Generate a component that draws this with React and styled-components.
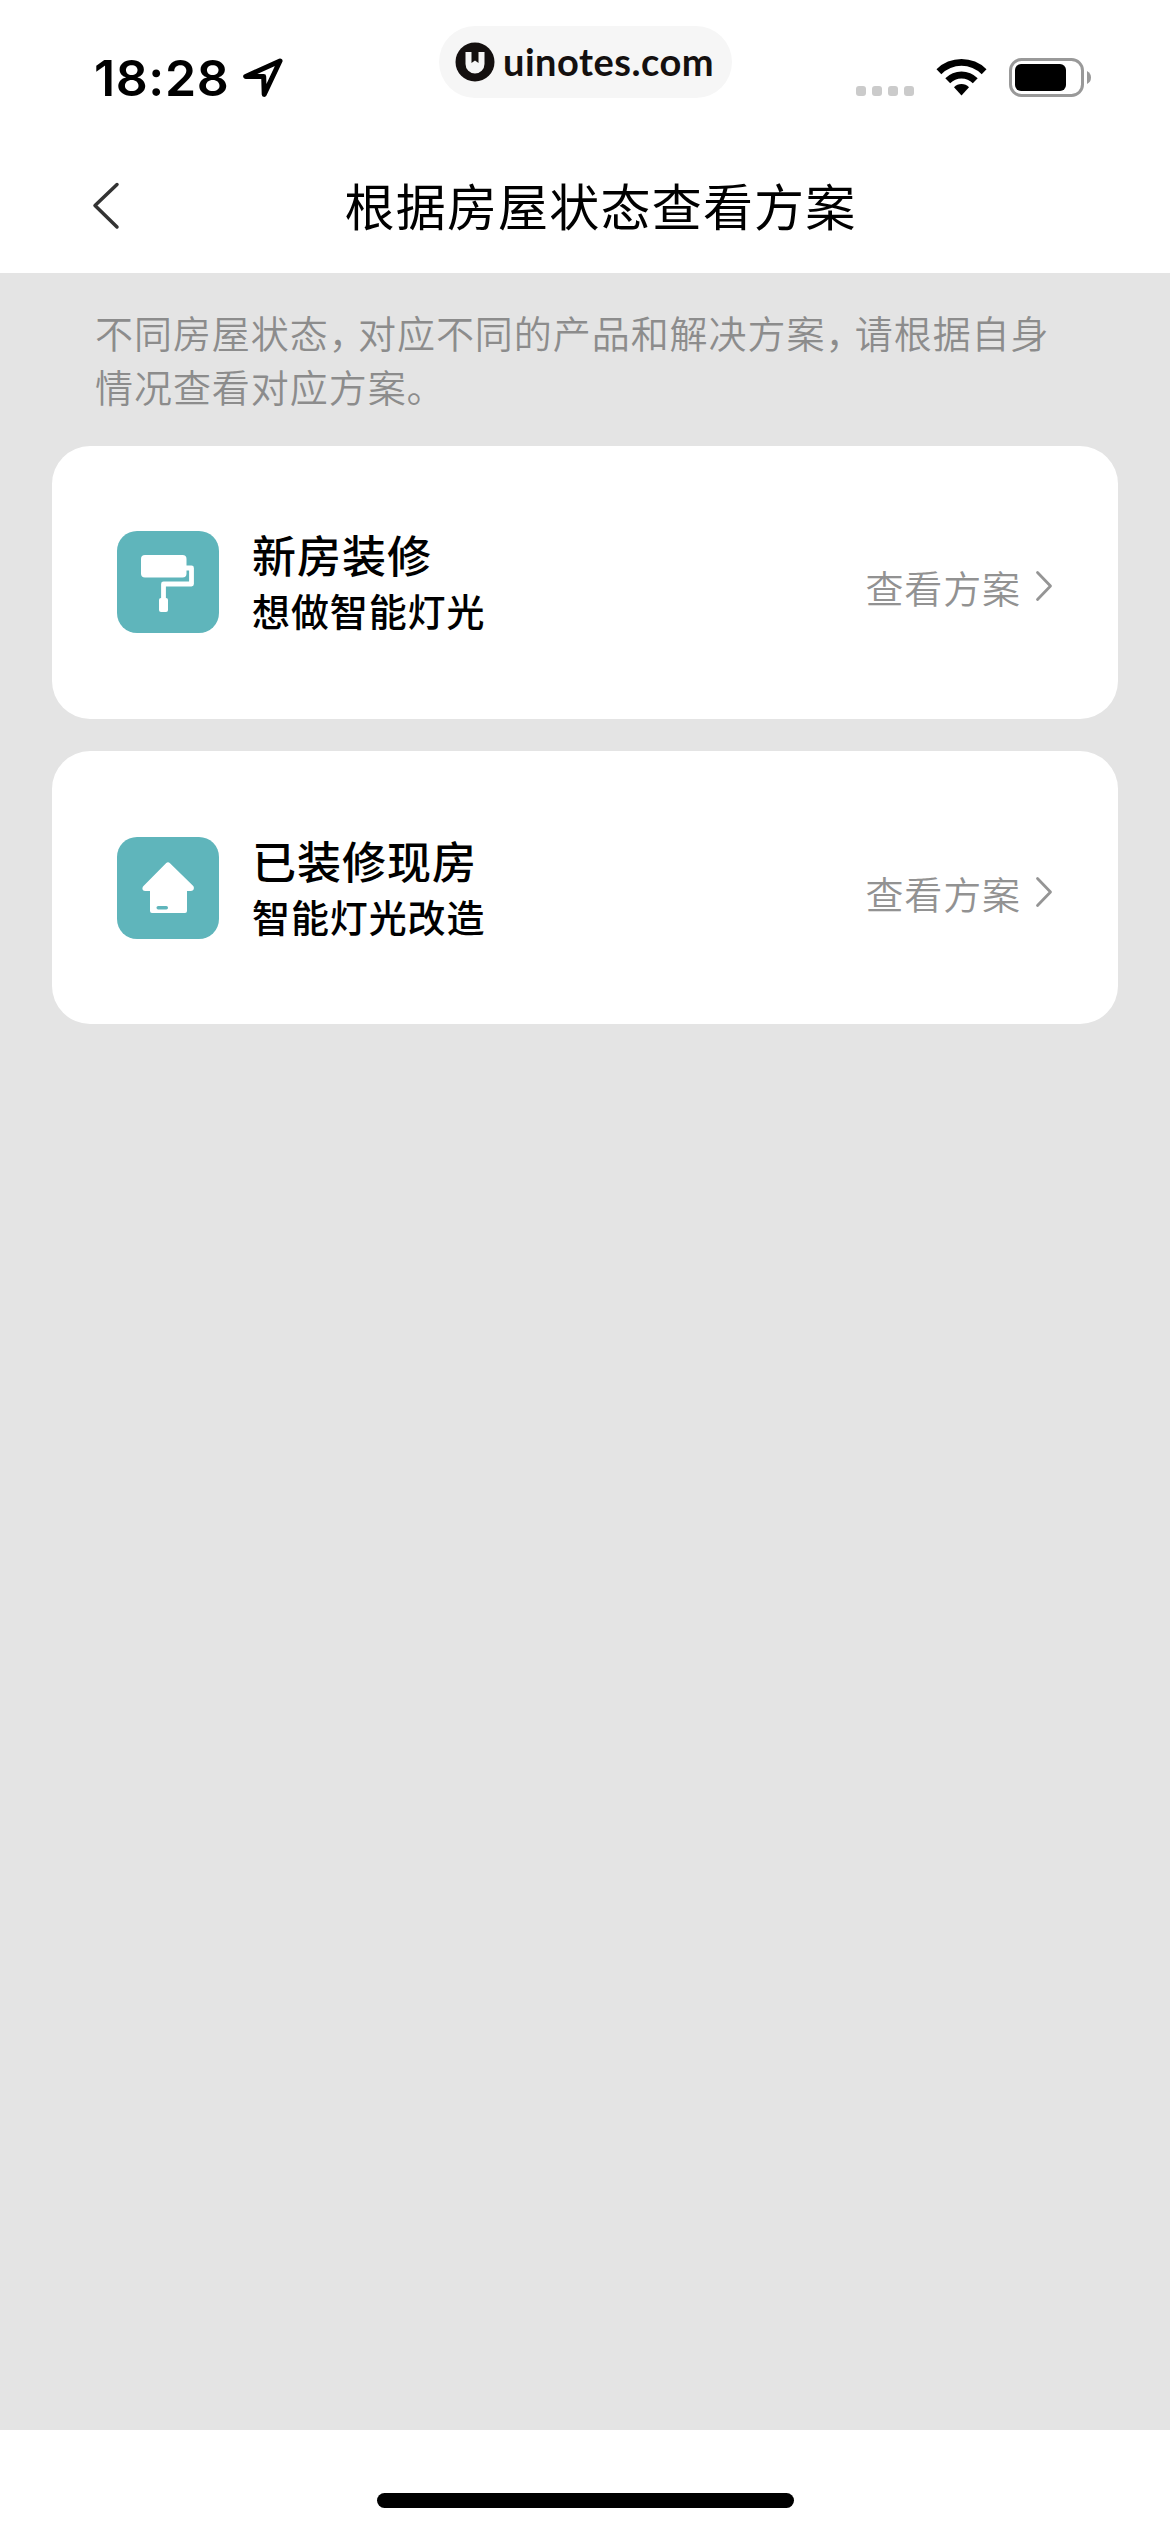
import React from 'react';
import styled, { createGlobalStyle } from 'styled-components';

const GlobalStyle = createGlobalStyle`
  * {
    box-sizing: border-box;
  }

  body {
    margin: 0;
    font-family: 'Noto Sans CJK SC', sans-serif;
    background: #fff;
  }
`;

const plans = [
  {
    id: 'new',
    icon: 'roller',
    title: '新房装修',
    text: '想做智能灯光'
  },
  {
    id: 'ready',
    icon: 'house',
    title: '已装修现房',
    text: '智能灯光改造'
  }
];

const Screen = styled.div`
  display: flex;
  flex-direction: column;
  width: 1170px;
  height: 2532px;
  overflow: hidden;
  background: #fff;
`;

const StatusBar = styled.div`
  display: grid;
  grid-template-columns: 439px 293px 1fr;
  height: 141px;
  padding-top: 26px;
`;

const StatusLeft = styled.div`
  display: flex;
  align-items: center;
  height: 104px;
  margin-top: -26px;
  padding: 52px 0 0 94px;
`;

const Time = styled.span`
  width: 149px;
  font: 600 50px/52px Inter, sans-serif;
  letter-spacing: 0.6px;
  color: #000;
`;

const Brand = styled.div`
  display: flex;
  align-items: center;
  height: 72px;
  padding-left: 16px;
  border-radius: 36px;
  background: #f6f6f6;
`;

const BrandName = styled.span`
  margin: -3px 0 0 8px;
  font: 700 38px/48px Lato, sans-serif;
  letter-spacing: 0.5px;
  color: #14100f;
`;

const StatusRight = styled.div`
  display: flex;
  align-items: flex-start;
  padding: 32px 0 0 124px;
`;

const Signal = styled.div`
  display: flex;
  gap: 6px;
  margin: 28px 22px 0 0;
`;

const SignalDot = styled.span`
  width: 10px;
  height: 10px;
  border-radius: 3px;
  background: #cbcbcb;
`;

const NavBar = styled.header`
  display: grid;
  grid-template-columns: 93px 1fr 93px;
  align-items: center;
  height: 132px;
`;

const BackIcon = styled.svg`
  margin: -2px 0 0 92px;
`;

const NavTitle = styled.h1`
  margin: -6px 0 0;
  padding-left: 31px;
  font-size: 50px;
  font-weight: 400;
  line-height: 72px;
  letter-spacing: 1.2px;
  text-align: center;
  color: #000;
`;

const Content = styled.main`
  flex: 1;
  padding: 32px 52px 0;
  background: #e4e4e4;
`;

const Intro = styled.p`
  margin: 0 0 33px;
  padding-left: 43px;
  font-size: 38px;
  font-weight: 350;
  line-height: 54px;
  letter-spacing: 0.95px;
  white-space: nowrap;
  color: #8c8c8c;
`;

const Comma = styled.span`
  letter-spacing: -8.7px;
`;

const Card = styled.a`
  display: flex;
  align-items: flex-start;
  height: 273px;
  margin-bottom: 32px;
  padding: 85px 65px 0;
  border-radius: 38px;
  background: #fff;

  & + & {
    padding-top: 86px;
  }
`;

const Tile = styled.svg`
  flex: none;
  border-radius: 20px;
  background: #5fb5bb;
`;

const CardBody = styled.div`
  flex: 1;
  margin: -7px 0 0 33px;
  color: #000;
`;

const CardTitle = styled.h2`
  margin: 0;
  font-size: 44px;
  font-weight: 500;
  line-height: 60px;
  letter-spacing: 1px;
`;

const CardText = styled.p`
  margin: 0;
  font-size: 38px;
  font-weight: 500;
  line-height: 52px;
  letter-spacing: 0.9px;
`;

const CardLink = styled.span`
  display: flex;
  align-items: center;
  gap: 14px;
  padding-top: 28px;
  font-size: 38px;
  font-weight: 350;
  line-height: 56px;
  letter-spacing: 0.9px;
  color: #929292;
`;

const LinkArrow = styled.svg`
  margin-top: -3px;
`;

const Footer = styled.footer`
  display: flex;
  justify-content: center;
  height: 102px;
  padding-top: 63px;
`;

const HomeIndicator = styled.span`
  width: 417px;
  height: 15px;
  border-radius: 8px;
  background: #000;
`;

const RollerIcon = () =>
  <Tile width='102' height='102' viewBox='0 0 102 102'>
    <rect x='24' y='24' width='45.5' height='22.5' rx='4' fill='#fff'/>
    <path
      d='M69 37H74.5V53H46.5V68'
      fill='none'
      stroke='#fff'
      strokeWidth='4.8'
      strokeLinejoin='round'
    />
    <rect x='42' y='67' width='9' height='14' rx='2' fill='#fff'/>
  </Tile>

const HouseIcon = () =>
  <Tile width='102' height='102' viewBox='0 0 102 102'>
    <path
      d='M49 26.2Q51 24.2 53 26.2L76 48.8C78 51 76.5 54 74 54H70V74Q70 76 68 76H35Q33 76 33 74V54H28C25.5 54 24.5 51 26.5 49Z'
      fill='#fff'
    />
    <rect x='39.5' y='69' width='11.5' height='3.4' rx='1.7' fill='#5fb5bb'/>
  </Tile>

const icons = {
  roller: RollerIcon,
  house: HouseIcon
};

const PlanCard = ({icon, title, text}) => {
  const Icon = icons[icon];

  return (
    <Card>
      <Icon/>
      <CardBody>
        <CardTitle>{title}</CardTitle>
        <CardText>{text}</CardText>
      </CardBody>
      <CardLink>
        查看方案
        <LinkArrow width='18' height='32' viewBox='0 0 18 32'>
          <path
            d='M2.5 2.5L15.5 16L2.5 29.5'
            fill='none'
            stroke='#959595'
            strokeWidth='2.8'
            strokeLinecap='round'
            strokeLinejoin='round'
          />
        </LinkArrow>
      </CardLink>
    </Card>
  );
};

const Status = () =>
  <StatusBar>
    <StatusLeft>
      <Time>18:28</Time>
      <svg width='40' height='40' viewBox='0 0 40 40'>
        <path
          d='M37 3L2.7 18.5H20.7L21.2 36.5Z'
          fill='none'
          stroke='#000'
          strokeWidth='5'
          strokeLinejoin='round'
        />
      </svg>
    </StatusLeft>
    <Brand>
      <svg width='40' height='40' viewBox='0 0 40 40'>
        <circle cx='20' cy='20' r='19.5' fill='#14100f'/>
        <path
          d='M10.5 10H16.5V21L20 18.5L23.5 21V10H25.5V10H29.5V22A9.5 9.5 0 0 1 10.5 22Z'
          fill='#f6f6f6'
        />
      </svg>
      <BrandName>uinotes.com</BrandName>
    </Brand>
    <StatusRight>
      <Signal>
        <SignalDot/>
        <SignalDot/>
        <SignalDot/>
        <SignalDot/>
      </Signal>
      <svg width='51' height='40' viewBox='0 0 51 40'>
        <path d='M0.5 11.2A35.5 35.5 0 0 1 50.5 11.2L45.7 16.2A28.5 28.5 0 0 0 5.3 16.2Z'/>
        <path d='M9.3 20.2A22.8 22.8 0 0 1 41.7 20.2L36.8 25.2A16 16 0 0 0 14.2 25.2Z'/>
        <path d='M18 29.2A10.5 10.5 0 0 1 33 29.2L25.5 37.5Z'/>
      </svg>
      <svg width='106' height='40' viewBox='-22 0 106 40'>
        <rect x='1.5' y='1.5' width='72' height='36' rx='11' fill='none' stroke='#999' strokeWidth='3'/>
        <rect x='6' y='6' width='51' height='27' rx='6'/>
        <path d='M78 13Q82 15 82 19.5T78 26Z' fill='#999'/>
      </svg>
    </StatusRight>
  </StatusBar>

const App = () =>
  <Screen>
    <GlobalStyle/>
    <Status/>
    <NavBar>
      <BackIcon width='28' height='48' viewBox='0 0 28 48'>
        <path
          d='M25 2.5L3 23.5L25 45'
          fill='none'
          stroke='#333'
          strokeWidth='3.5'
          strokeLinecap='round'
          strokeLinejoin='round'
        />
      </BackIcon>
      <NavTitle>根据房屋状态查看方案</NavTitle>
    </NavBar>
    <Content>
      <Intro>
        不同房屋状态<Comma>，</Comma>对应不同的产品和解决方案<Comma>，</Comma>请根据自身
        <br/>
        情况查看对应方案。
      </Intro>
      {
        plans.map(plan =>
          <PlanCard key={plan.id} {...plan}/>
        )
      }
    </Content>
    <Footer>
      <HomeIndicator/>
    </Footer>
  </Screen>

export default App;
